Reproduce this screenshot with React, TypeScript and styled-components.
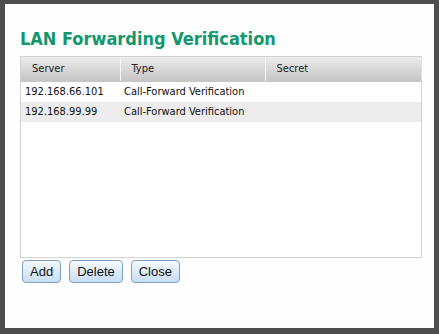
import React from 'react'
import styled, { createGlobalStyle } from 'styled-components'

const GlobalStyle = createGlobalStyle`
    html, body {
        margin: 0;
        padding: 0;
        background: #4e4e4e;
    }
`

const Dialog = styled.div`
    box-sizing: border-box;
    margin: 4px 0 0 5px;
    width: 429px;
    height: 324px;
    background: #fefefe;
    padding: 24px 0 0 15px;
    font-family: "DejaVu Sans Condensed", "DejaVu Sans", Verdana, sans-serif;
`

const Title = styled.h1`
    margin: 0 0 6px 0;
    font-size: 18px;
    line-height: 22px;
    font-weight: bold;
    color: #14976d;
`

const GridBox = styled.div`
    box-sizing: border-box;
    width: 402px;
    height: 202px;
    border: 1px solid #d2d2d2;
    background: #fff;
`

const Table = styled.table`
    width: 100%;
    border-collapse: collapse;
    table-layout: fixed;
    font-size: 11px;
`

const HeadCell = styled.th<{ $w: number }>`
    width: ${props => props.$w}px;
    height: 24px;
    padding: 0 0 0 11px;
    text-align: left;
    font-weight: normal;
    color: #222;
    background: linear-gradient(#ececec, #c4c4c4);
    border-right: 1px solid #f4f4f4;
    border-bottom: 1px solid #c8c8c8;
    box-sizing: border-box;

    &:last-child {
        border-right: 1px solid #e0e0e0;
    }
`

const Row = styled.tr<{ $alt?: boolean }>`
    background: ${props => props.$alt ? '#ececec' : '#ffffff'};
`

const Cell = styled.td`
    height: 20px;
    padding: 0 0 0 4px;
    color: #101010;
    white-space: nowrap;
    overflow: hidden;
`

const ButtonBar = styled.div`
    display: flex;
    gap: 8px;
    margin: 2px 0 0 2px;
`

const Button = styled.button`
    height: 23px;
    padding: 0 7px;
    font-family: "Liberation Sans", Arial, sans-serif;
    font-size: 13px;
    color: #111;
    border: 1px solid #7e9fc4;
    border-radius: 4px;
    background: linear-gradient(#f5f9fe, #c8ddf4);
    cursor: pointer;
`

const rows = [
    { server: '192.168.66.101', type: 'Call-Forward Verification', secret: '' },
    { server: '192.168.99.99', type: 'Call-Forward Verification', secret: '' },
]

export default function App() {
    return (
        <>
            <GlobalStyle />
            <Dialog>
                <Title>LAN Forwarding Verification</Title>
                <GridBox>
                    <Table>
                        <thead>
                            <tr>
                                <HeadCell $w={99}>Server</HeadCell>
                                <HeadCell $w={145}>Type</HeadCell>
                                <HeadCell $w={156}>Secret</HeadCell>
                            </tr>
                        </thead>
                        <tbody>
                            {rows.map((r, i) => (
                                <Row key={r.server} $alt={i % 2 == 1}>
                                    <Cell>{r.server}</Cell>
                                    <Cell>{r.type}</Cell>
                                    <Cell>{r.secret}</Cell>
                                </Row>
                            ))}
                        </tbody>
                    </Table>
                </GridBox>
                <ButtonBar>
                    <Button>Add</Button>
                    <Button>Delete</Button>
                    <Button>Close</Button>
                </ButtonBar>
            </Dialog>
        </>
    )
}
